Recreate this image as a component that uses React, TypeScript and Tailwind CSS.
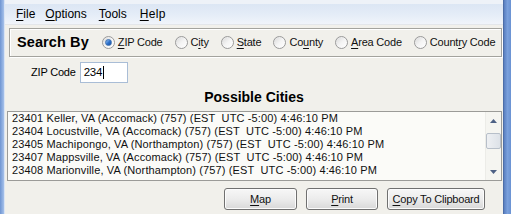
import React from "react";

const U = ({ c }: { c: string }) => <span className="underline underline-offset-[2px]">{c}</span>;

function Radio({ checked, label }: { checked?: boolean; label: React.ReactNode }) {
  return (
    <div className="flex items-center">
      <div className="w-[13px] h-[13px] rounded-full border border-[#9a9a9a] bg-gradient-to-br from-[#d8d8d8] via-[#f4f4f4] to-[#ffffff] flex items-center justify-center shadow-[inset_0_0_1px_#ffffff]">
        {checked && (
          <div className="w-[7px] h-[7px] rounded-full bg-gradient-to-br from-[#9cc6f2] via-[#2f74cf] to-[#1b4f9c] border border-[#3a6fb0]" />
        )}
      </div>
      <span className="ml-[3px] text-[11px] tracking-[-0.2px] text-[#111]">{label}</span>
    </div>
  );
}

function Btn({ w, children }: { w: string; children: React.ReactNode }) {
  return (
    <div
      className={`${w} h-[22px] rounded-[3px] border border-[#707070] bg-gradient-to-b from-[#f7f7f7] via-[#ececec] to-[#d8d8d8] shadow-[inset_0_0_0_1px_#fcfcfc] flex items-center justify-center text-[11px] tracking-[-0.2px] text-[#111]`}
    >
      {children}
    </div>
  );
}

const rows = [
  "23401 Keller, VA (Accomack) (757) (EST  UTC -5:00) 4:46:10 PM",
  "23404 Locustville, VA (Accomack) (757) (EST  UTC -5:00) 4:46:10 PM",
  "23405 Machipongo, VA (Northampton) (757) (EST  UTC -5:00) 4:46:10 PM",
  "23407 Mappsville, VA (Accomack) (757) (EST  UTC -5:00) 4:46:10 PM",
  "23408 Marionville, VA (Northampton) (757) (EST  UTC -5:00) 4:46:10 PM",
];

export default function App() {
  return (
    <div className="w-[511px] h-[214px] overflow-hidden flex font-['Liberation_Sans',Arial,sans-serif] text-black">
      <div className="w-[5px] h-full bg-gradient-to-r from-[#6f95d2] to-[#a6c1ea] border-r border-[#d9e4f4]" />
      <div className="flex-1 h-full flex flex-col bg-[#f1f0eb]">
        <div className="h-[4px] bg-[#eef2f8]" />
        <div className="h-[21px] flex items-center text-[12px] bg-gradient-to-b from-[#dce6f4] via-[#e4ecf7] to-[#f0f4fa] border-b border-[#e3e6ea]">
          <span className="ml-[11px]"><U c="F" />ile</span>
          <span className="ml-[10px]"><U c="O" />ptions</span>
          <span className="ml-[12px]"><U c="T" />ools</span>
          <span className="ml-[13px] tracking-[0.3px]"><U c="H" />elp</span>
        </div>
        <div className="mt-[3px] ml-[4px] mr-[1px] h-[29px] border border-[#a3a39e] shadow-[inset_1px_1px_0_#ffffff,1px_1px_0_#ffffff] flex items-center pl-[7px]">
          <span className="text-[14.5px] font-bold tracking-[0.1px]">Search By</span>
          <div className="ml-[13px] flex items-center gap-[12px]">
            <Radio checked label={<><U c="Z" />IP Code</>} />
            <Radio label={<>C<U c="i" />ty</>} />
            <Radio label={<><U c="S" />tate</>} />
            <Radio label={<>Co<U c="u" />nty</>} />
            <Radio label={<><U c="A" />rea Code</>} />
            <Radio label={<>Count<U c="r" />y Code</>} />
          </div>
        </div>
        <div className="mt-[5px] h-[21px] flex items-center pl-[26px]">
          <span className="text-[11px] tracking-[-0.2px]">ZIP Code</span>
          <div className="ml-[4px] w-[48px] h-[21px] border border-[#a9bdd6] bg-white flex items-center pl-[3px] text-[11.5px] tracking-[-0.2px]">
            234
            <div className="ml-[1px] w-[1px] h-[13px] bg-black" />
          </div>
        </div>
        <div className="mt-[6px] h-[16px] leading-[16px] text-center text-[14px] font-bold">Possible Cities</div>
        <div className="mt-[6px] ml-[2px] mr-[1px] h-[70px] border border-[#9b9b98] bg-[#fbfbf8] flex">
          <div className="flex-1 pl-[4px] overflow-hidden">
            {rows.map((r) => (
              <div key={r} className="h-[13px] leading-[13px] text-[11px] tracking-[0.13px] whitespace-pre text-[#111]">
                {r}
              </div>
            ))}
          </div>
          <div className="w-[16px] h-full bg-[#f5f5f1] border-l border-[#ecece8] flex flex-col items-center">
            <div className="h-[17px] w-full flex items-center justify-center">
              <svg width="7" height="4" viewBox="0 0 7 4"><path d="M0 4 L3.5 0 L7 4 Z" fill="#4d6185" /></svg>
            </div>
            <div className="mt-[4px] w-[15px] h-[16px] rounded-[2px] border border-[#b7bfc9] bg-gradient-to-r from-[#eef0f3] to-[#dde2e8]" />
            <div className="flex-1" />
            <div className="h-[17px] w-full flex items-center justify-center">
              <svg width="7" height="4" viewBox="0 0 7 4"><path d="M0 0 L3.5 4 L7 0 Z" fill="#4d6185" /></svg>
            </div>
          </div>
        </div>
        <div className="mt-[7px] flex justify-end pr-[18px] gap-[9px]">
          <Btn w="w-[73px]"><U c="M" />ap</Btn>
          <Btn w="w-[72px]"><U c="P" />rint</Btn>
          <Btn w="w-[98px]"><U c="C" />opy To Clipboard</Btn>
        </div>
      </div>
      <div className="w-[8px] h-full bg-gradient-to-r from-[#5a7fc0] via-[#7aa0dc] to-[#6b93d3] border-l border-[#4d6ea8]" />
    </div>
  );
}
